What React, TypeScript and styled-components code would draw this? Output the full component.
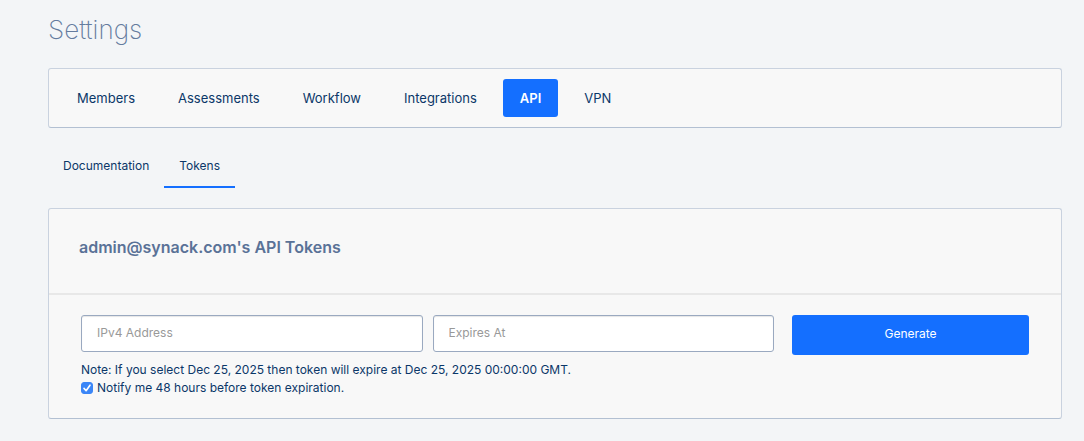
import React from "react";
import styled, { createGlobalStyle } from "styled-components";

const GlobalStyle = createGlobalStyle`
  *, *::before, *::after { box-sizing: border-box; }
  body {
    margin: 0;
    background: #f3f5f7;
    color: #0b3768;
    font-family: Inter, "Liberation Sans", sans-serif;
    font-size: 12px;
    line-height: 18px;
  }
`;

const Page = styled.main`
  padding: 14px 22px 22px 48px;
`;

const PageTitle = styled.h1`
  margin: 0 0 22px;
  color: #647b9e;
  font-size: 26px;
  font-weight: 200;
  line-height: 32px;
`;

const Panel = styled.section`
  border: 1px solid #c9d2df;
  border-bottom-color: #b3c0d2;
  border-radius: 3px;
  background: #f8f8f8;
`;

const MainNav = styled(Panel).attrs({ as: "nav" })`
  display: flex;
  gap: 9px;
  padding: 10px 11px;
`;

const NavLink = styled.a<{ $active?: boolean }>`
  padding: 10px 17px;
  border-radius: 3px;
  background: ${(p) => (p.$active ? "#146fff" : "transparent")};
  color: ${(p) => (p.$active ? "#fff" : "inherit")};
  font-size: 13px;
  font-weight: ${(p) => (p.$active ? 600 : 400)};
  text-decoration: none;
`;

const SubNav = styled.nav`
  display: flex;
  margin: 20px 0;
`;

const SubLink = styled.a<{ $active?: boolean }>`
  padding: 9px 15px 11px;
  border-bottom: 2px solid ${(p) => (p.$active ? "#146fff" : "transparent")};
  color: inherit;
  text-decoration: none;
`;

const PanelHeader = styled.header`
  padding: 26px 30px 34px;
  border-bottom: 2px solid #e8e8e8;
`;

const PanelTitle = styled.h2`
  margin: 0;
  color: #5a7297;
  font-size: 16px;
  font-weight: 600;
  line-height: 24px;
`;

const TokenForm = styled.form`
  padding: 20px 32px 21px;
`;

const FormRow = styled.div`
  display: flex;
  align-items: flex-start;
  gap: 18px;
`;

const Fields = styled.div`
  display: flex;
  flex: 1 1 0;
  gap: 10px;
`;

const TextInput = styled.input`
  flex: 1 1 0;
  min-width: 0;
  height: 37px;
  padding: 0 15px 2px;
  border: 1px solid #9aa9c0;
  border-radius: 3px;
  background: #fff;
  box-shadow: inset 0 1px 1px rgba(0, 0, 0, 0.1);
  color: inherit;
  font: inherit;

  &::placeholder {
    color: #999;
    opacity: 1;
  }
`;

const GenerateButton = styled.button`
  flex: 0 0 25%;
  height: 40px;
  padding: 0 16px 2px;
  border: 0;
  border-radius: 3px;
  background: #146fff;
  color: #fff;
  font: inherit;
`;

const Note = styled.p`
  margin: 6px 0 0;
`;

const CheckLabel = styled.label`
  display: flex;
  align-items: center;
  gap: 4px;
`;

const CheckBox = styled.span`
  position: relative;
  display: flex;
  width: 12px;
  height: 12px;

  svg {
    position: absolute;
    inset: 0;
    opacity: 0;
    pointer-events: none;
  }

  input:checked + svg {
    opacity: 1;
  }
`;

const CheckInput = styled.input`
  width: 12px;
  height: 12px;
  margin: 0;
  border: 1px solid #8b97a8;
  border-radius: 3px;
  background: #fff;
  appearance: none;

  &:checked {
    border-color: #3b86f7;
    background: #3b86f7;
  }
`;

const sections = ["Members", "Assessments", "Workflow", "Integrations", "API", "VPN"];
const tabs = ["Documentation", "Tokens"];

export default function App() {
  return (
    <>
      <GlobalStyle />
      <Page>
        <PageTitle>Settings</PageTitle>
        <MainNav>
          {sections.map((name) => (
            <NavLink key={name} href={`#${name.toLowerCase()}`} $active={name === "API"}>
              {name}
            </NavLink>
          ))}
        </MainNav>
        <SubNav>
          {tabs.map((name) => (
            <SubLink key={name} href={`#${name.toLowerCase()}`} $active={name === "Tokens"}>
              {name}
            </SubLink>
          ))}
        </SubNav>
        <Panel>
          <PanelHeader>
            <PanelTitle>admin@synack.com's API Tokens</PanelTitle>
          </PanelHeader>
          <TokenForm onSubmit={(e) => e.preventDefault()}>
            <FormRow>
              <Fields>
                <TextInput type="text" placeholder="IPv4 Address" aria-label="IPv4 Address" />
                <TextInput type="text" placeholder="Expires At" aria-label="Expires At" />
              </Fields>
              <GenerateButton type="submit">Generate</GenerateButton>
            </FormRow>
            <Note>Note: If you select Dec 25, 2025 then token will expire at Dec 25, 2025 00:00:00 GMT.</Note>
            <CheckLabel>
              <CheckBox>
                <CheckInput type="checkbox" defaultChecked />
                <svg viewBox="0 0 12 12" width="12" height="12" fill="none" aria-hidden="true">
                  <path d="M3 6.4 5.1 8.7 9 3.2" stroke="#fff" strokeWidth="1.6" strokeLinecap="round" strokeLinejoin="round" />
                </svg>
              </CheckBox>
              Notify me 48 hours before token expiration.
            </CheckLabel>
          </TokenForm>
        </Panel>
      </Page>
    </>
  );
}
